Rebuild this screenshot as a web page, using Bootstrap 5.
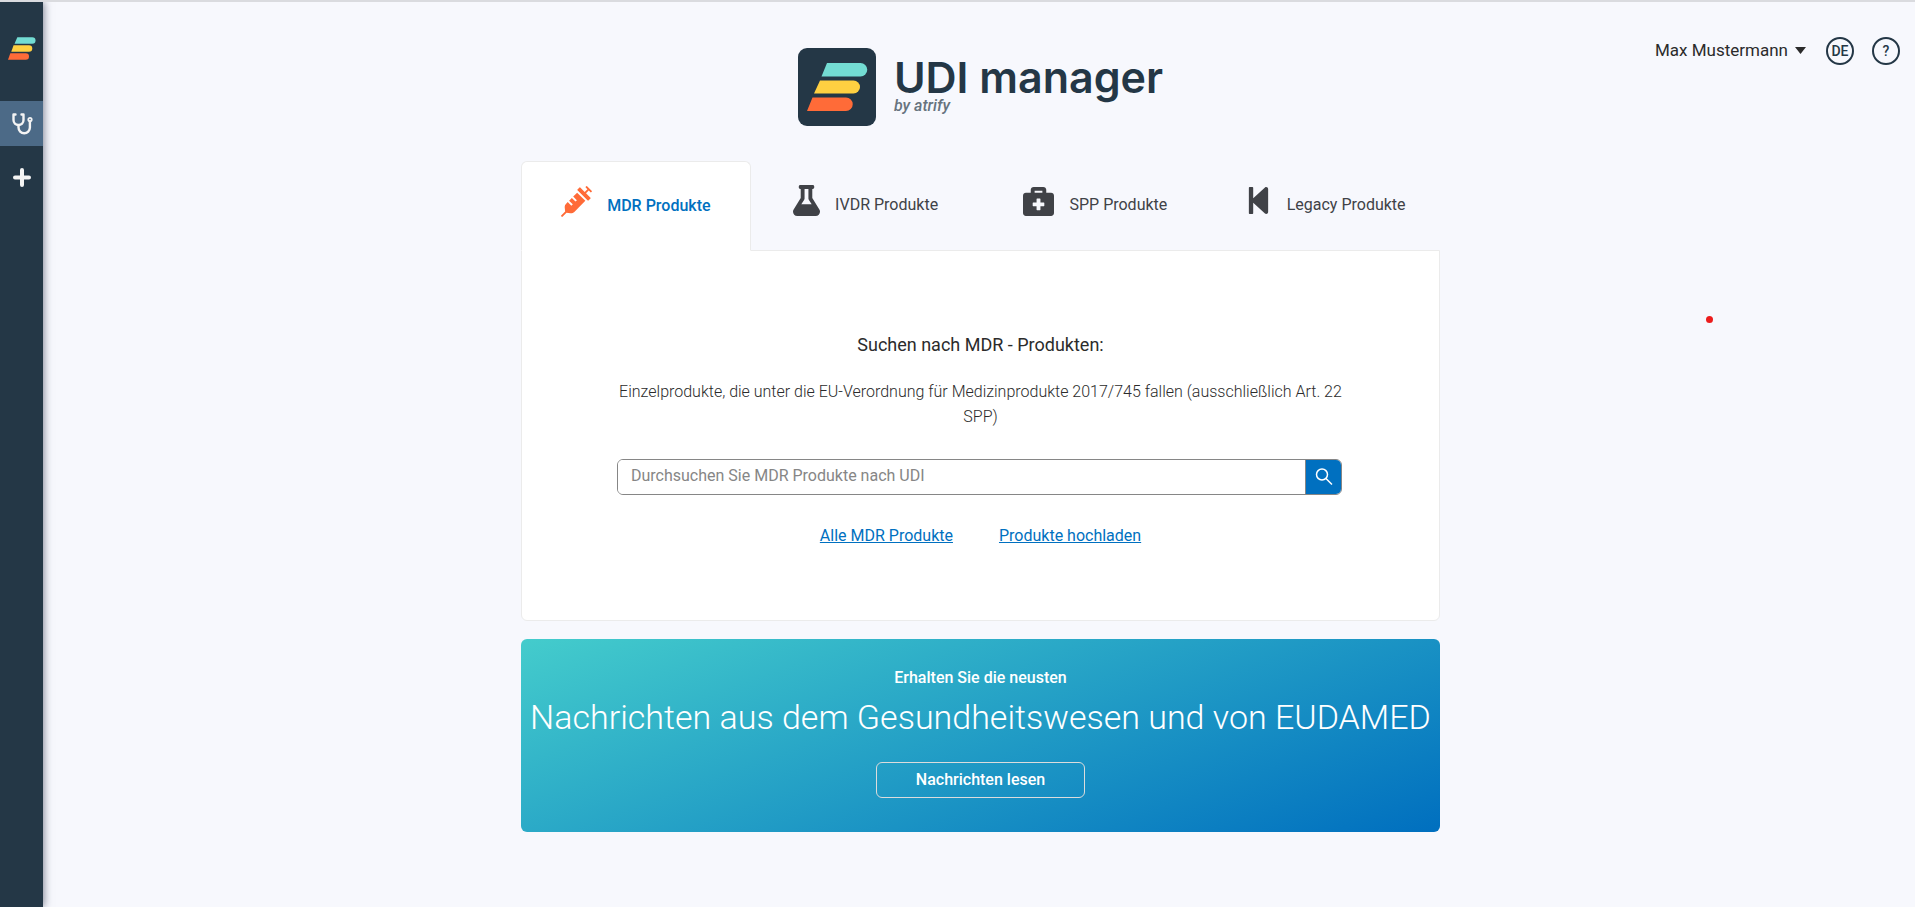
<!DOCTYPE html>
<html lang="de">
<head>
<meta charset="utf-8">
<meta name="viewport" content="width=device-width, initial-scale=1">
<title>UDI manager</title>
<link href="https://cdn.jsdelivr.net/npm/bootstrap@5.3.0/dist/css/bootstrap.min.css" rel="stylesheet">
<style>
:root { --navy: #243746; --brand: #0070c0; --line: #ebebeb; }
body { font-family: Roboto, "Liberation Sans", sans-serif; font-size: 16px; line-height: 24px; color: #2b2b2b; background: #f7f8fd; border-top: 2px solid #dadbdf; }
.side-rail { width: 43px; background: var(--navy); box-shadow: 1px 0 8px rgba(30, 35, 60, .55); }
.side-brand { height: 99px; padding-top: 35px; padding-left: 8px; }
.side-link { height: 45px; color: #f4f4f4; }
.side-link.active { background: #4c6a87; }
.main-area { padding-left: 3px; }
.user-bar { top: 35px; right: 15px; gap: 18px; }
.user-btn { font-size: 17px; line-height: 22px; color: #2b2b2b; gap: 7px; margin-bottom: 2px; }
.user-gap { margin-right: 2px; }
.round-btn { width: 28px; height: 28px; border: 2px solid var(--navy); border-radius: 50%; background: transparent; color: var(--navy); font-size: 14px; font-weight: 500; line-height: 24px; }
.product-column { width: 919px; max-width: 100%; }
.brand-block { padding-top: 46px; gap: 18px; margin-bottom: 35px; }
.brand-title { font-family: Inter, sans-serif; font-size: 43px; font-weight: 600; line-height: 40px; color: var(--navy); padding-top: 9px; }
.brand-by { font-style: italic; font-weight: 500; line-height: 18px; color: #66737e; }
.product-tabs { margin-bottom: -1px; }
.product-tabs .nav-link { height: 90px; padding: 23px 0 0; gap: 15px; color: #404247; font-weight: 400; border: 1px solid transparent; border-radius: 6px 6px 0 0; }
.product-tabs .nav-link span { padding-top: 8px; }
.product-tabs .nav-link.active { padding-top: 24px; background: #fff; color: var(--brand); font-weight: 500; border-color: var(--line) var(--line) #fff; }
.search-panel { padding: 82px 95px 72px; background: #fff; border: 1px solid var(--line); border-radius: 0 0 6px 6px; }
.panel-title { font-size: 18px; font-weight: 400; line-height: 24px; margin-bottom: 22px; }
.panel-text { font-weight: 300; line-height: 25px; margin-bottom: 30px; color: #2b2b2b; }
.search-box { height: 36px; border: 1px solid #868686; border-radius: 6px; overflow: hidden; margin-right: 2px; margin-bottom: 29px; }
.search-box input { border: 0; padding: 0 13px 2px; font-size: 16px; }
.search-box input::placeholder { color: #868686; }
.search-box button { width: 36px; border: 0; border-left: 1px solid #868686; background: var(--brand); }
.panel-links { gap: 46px; }
.panel-links a { color: var(--brand); }
.news-banner { margin-top: 18px; padding: 27px 8px 34px; border-radius: 6px; color: #fff; background: linear-gradient(160deg, #44cccc, #006fbf); }
.news-title { font-size: 34px; font-weight: 300; line-height: 40px; margin: 7px 0 25px; }
.news-btn { width: 209px; height: 36px; border: 1px solid #dcdcdc; border-radius: 6px; background: transparent; color: #fff; font-weight: 500; }
.news-lead { font-weight: 500; }
.marker-dot { top: 314px; right: 202px; width: 7px; height: 7px; border-radius: 50%; background: #ec1c1c; }
</style>
</head>
<body class="d-flex min-vh-100">
<nav class="side-rail flex-shrink-0 d-flex flex-column" aria-label="Hauptnavigation">
  <a class="side-brand d-block" href="#" aria-label="Startseite">
    <svg class="d-block" width="28" height="23" viewBox="0 0 60 48"><path fill="#73dcd3" d="M20 0H52a7 7 0 0 1 0 14H14z"/><path fill="#ffd041" d="M12 17H45a7 7 0 0 1 0 14H7z"/><path fill="#ff6b38" d="M5 34H38a7 7 0 0 1 0 14H0z"/></svg>
  </a>
  <a class="side-link active d-flex align-items-center justify-content-center" href="#" aria-label="Produkte">
    <svg width="22" height="24" viewBox="0 0 22 24" fill="none" stroke="currentColor" stroke-width="2.400" stroke-linecap="round" stroke-linejoin="round"><path d="M4.500 2.500H2.500v5.500a5 5 0 0 0 10 0V2.500h-2"/><path d="M7.500 13.500v2a5.700 5.700 0 0 0 11.400 0V10"/><circle cx="19" cy="7.500" r="1.700" stroke-width="1.800"/></svg>
  </a>
  <a class="side-link d-flex align-items-center justify-content-center mt-2" href="#" aria-label="Neu">
    <svg width="18" height="20" viewBox="0 0 18 20" stroke="currentColor" stroke-width="4" stroke-linecap="round"><path d="M9 3v15M2 10.500h14"/></svg>
  </a>
</nav>
<main class="main-area flex-grow-1 position-relative">
  <div class="user-bar position-absolute d-flex align-items-center">
    <button class="user-btn user-gap btn p-0 border-0 d-flex align-items-center" type="button">Max Mustermann <svg width="11" height="7" viewBox="0 0 11 7"><path fill="#2b2b2b" d="M0 0h11L5.500 7z"/></svg></button>
    <button class="round-btn p-0" type="button">DE</button>
    <button class="round-btn p-0" type="button">?</button>
  </div>
  <span class="marker-dot position-absolute"></span>
  <div class="product-column mx-auto">
    <header class="brand-block d-flex justify-content-center">
      <svg width="78" height="78" viewBox="0 0 78 78"><rect width="78" height="78" rx="9" fill="#243746"/><path fill="#73dcd3" d="M29 15H62.500a6.500 6.500 0 0 1 0 13.500H23.500z"/><path fill="#ffd041" d="M22 32.500H55.500a6.500 6.500 0 0 1 0 13H16z"/><path fill="#ff6b38" d="M14.500 49.500H48a6.500 6.500 0 0 1 0 13.500H9z"/></svg>
      <div>
        <h1 class="brand-title mb-0">UDI manager</h1>
        <div class="brand-by">by atrify</div>
      </div>
    </header>
    <ul class="product-tabs nav nav-fill nav-justified">
      <li class="nav-item"><a class="nav-link active d-flex justify-content-center align-items-start" href="#"><svg width="31" height="31" viewBox="0 0 512 512" fill="#ff6b38"><path d="M201.5 174.8l55.7 55.8c3.1 3.1 3.1 8.2 0 11.3l-11.3 11.3c-3.1 3.1-8.2 3.1-11.3 0l-55.7-55.8-45.3 45.3 55.800 55.8c3.1 3.1 3.1 8.2 0 11.3l-11.3 11.3c-3.1 3.1-8.2 3.1-11.3 0L111 265.2l-26.4 26.4c-17.3 17.3-25.6 41.1-23 65.4l7.1 63.6L2.3 487c-3.1 3.1-3.1 8.2 0 11.3l11.3 11.3c3.1 3.1 8.2 3.1 11.3 0l66.3-66.3 63.6 7.1c23.9 2.6 47.9-5.4 65.4-23l181.9-181.9-135.7-135.7-64.9 65zm308.2-93.3L430.5 2.3c-3.1-3.1-8.2-3.1-11.3 0l-11.3 11.3c-3.1 3.1-3.1 8.2 0 11.3l28.3 28.3-45.3 45.3-56.600-56.6-17-17c-3.1-3.1-8.2-3.1-11.3 0l-33.9 33.9c-3.1 3.1-3.1 8.2 0 11.3l17 17L424.8 223l17 17c3.1 3.1 8.2 3.1 11.3 0l33.9-34c3.1-3.1 3.1-8.2 0-11.3l-73.5-73.5 45.3-45.3 28.3 28.3c3.1 3.1 8.2 3.1 11.3 0l11.3-11.3c3.1-3.2 3.1-8.2 0-11.4z"/></svg><span>MDR Produkte</span></a></li>
      <li class="nav-item"><a class="nav-link d-flex justify-content-center align-items-start" href="#"><svg width="27" height="31" viewBox="0 0 448 512" fill="currentColor"><path d="M437.2 403.5L320 215V64h8c13.3 0 24-10.7 24-24V24c0-13.3-10.7-24-24-24H120c-13.3 0-24 10.7-24 24v16c0 13.3 10.7 24 24 24h8v151L10.8 403.5C-18.5 450.6 15.3 512 70.9 512h306.2c55.7 0 89.4-61.5 60.1-108.5zM137.9 320l48.2-77.6c3.7-5.2 5.8-11.6 5.800-18.4V64h64v160c0 6.9 2.2 13.2 5.8 18.4l48.2 77.6h-172z"/></svg><span>IVDR Produkte</span></a></li>
      <li class="nav-item"><a class="nav-link d-flex justify-content-center align-items-start" href="#"><svg width="31" height="31" viewBox="0 0 512 512" fill="currentColor"><path d="M464 128h-80V80c0-26.5-21.5-48-48-48H176c-26.5 0-48 21.5-48 48v48H48c-26.5 0-48 21.5-48 48v288c0 26.5 21.5 48 48 48h416c26.5 0 48-21.5 48-48V176c0-26.5-21.5-48-48-48zM192 96h128v32H192V96zm160 248c0 4.4-3.6 8-8 8h-56v56c0 4.4-3.6 8-8 8h-48c-4.4 0-8-3.6-8-8v-56h-56c-4.4 0-8-3.6-8-8v-48c0-4.4 3.6-8 8-8h56v-56c0-4.4 3.6-8 8-8h48c4.4 0 8 3.6 8 8v56h56c4.4 0 8 3.6 8 8v48z"/></svg><span>SPP Produkte</span></a></li>
      <li class="nav-item"><a class="nav-link d-flex justify-content-center align-items-start" href="#"><svg width="27" height="31" viewBox="0 0 448 512" fill="currentColor"><path d="M64 468V44c0-6.6 5.4-12 12-12h48c6.600 0 12 5.4 12 12v176.4l195.5-181C352.1 22.3 384 36.6 384 64v384c0 27.4-31.9 41.7-52.5 24.6L136 292.7V468c0 6.6-5.4 12-12 12H76c-6.6 0-12-5.4-12-12z"/></svg><span>Legacy Produkte</span></a></li>
    </ul>
    <section class="search-panel text-center">
      <h2 class="panel-title">Suchen nach MDR - Produkten:</h2>
      <p class="panel-text">Einzelprodukte, die unter die EU-Verordnung für Medizinprodukte 2017/745 fallen (ausschließlich Art. 22 SPP)</p>
      <form class="search-box d-flex">
        <input class="flex-grow-1" type="text" aria-label="Suche" placeholder="Durchsuchen Sie MDR Produkte nach UDI">
        <button class="p-0 d-flex align-items-center justify-content-center" type="button" aria-label="Suchen"><svg width="18" height="18" viewBox="0 0 18 18" fill="none" stroke="#fff" stroke-width="1.500"><circle cx="7" cy="6.500" r="5.500"/><path d="M11 10.500L17 16.500"/></svg></button>
      </form>
      <div class="panel-links d-flex justify-content-center"><a href="#">Alle MDR Produkte</a><a href="#">Produkte hochladen</a></div>
    </section>
    <section class="news-banner text-center">
      <div class="news-lead">Erhalten Sie die neusten</div>
      <h2 class="news-title">Nachrichten aus dem Gesundheitswesen und von EUDAMED</h2>
      <button class="news-btn" type="button">Nachrichten lesen</button>
    </section>
  </div>
</main>
<script src="https://cdn.jsdelivr.net/npm/bootstrap@5.3.0/dist/js/bootstrap.bundle.min.js"></script>
</body>
</html>
